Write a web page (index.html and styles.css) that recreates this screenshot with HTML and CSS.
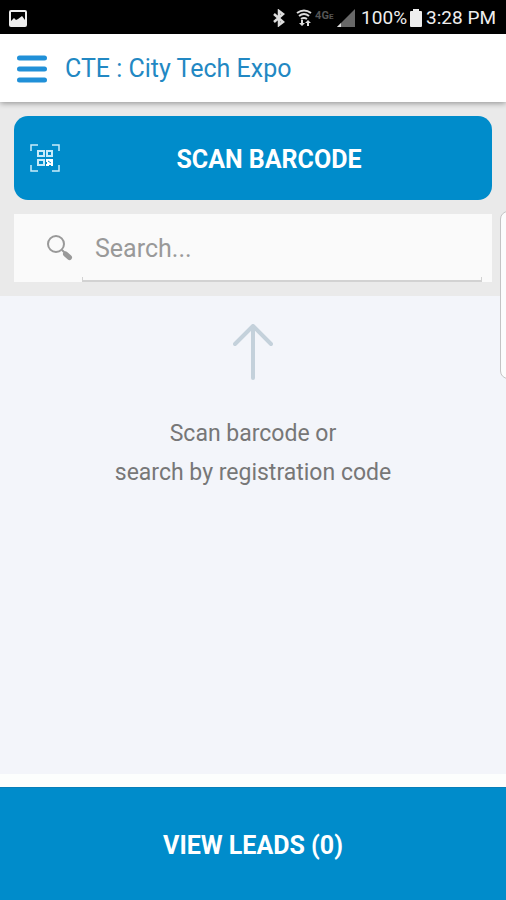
FILE: index.html
```html
<!DOCTYPE html>
<html lang="en">
<head>
<meta charset="utf-8">
<meta name="viewport" content="width=device-width, initial-scale=1">
<title>CTE : City Tech Expo</title>
<link rel="stylesheet" href="styles.css">
</head>
<body>
<div class="app">
  <div class="status">
    <svg class="status-photo" width="18" height="17" viewBox="0 0 18 17" aria-hidden="true">
      <path fill="#eee" fill-rule="evenodd" d="M2 0h14q2 0 2 2v13q0 2-2 2H2q-2 0-2-2V2q0-2 2-2zM2 2v9l3-3 2 2 2-1 4-3 3 4V2z"/>
    </svg>
    <svg width="12" height="18" viewBox="0 0 12 18" fill="none" stroke="#ddd" stroke-width="2.500" aria-hidden="true">
      <path d="M1 5l9 8-4 3V2l4 3-9 8"/>
    </svg>
    <svg class="status-wifi" width="16" height="18" viewBox="0 0 16 18" fill="none" stroke="#ddd" stroke-width="2" aria-hidden="true">
      <path d="M1 4q7-5 14 0M3 7q5-4 10 0M5 10q3-2 6 0"/>
      <path fill="#ddd" stroke="none" d="M3 14h2v-3h2v3h2l-3 3zM9 14l3-3 3 3h-2v3h-2v-3z"/>
    </svg>
    <span class="status-network">4G<small>E</small></span>
    <svg class="status-signal" width="18" height="18" viewBox="0 0 18 18" aria-hidden="true">
      <path fill="#686868" d="M18 0v18H0z"/><path fill="#ddd" d="M4 14v4H0z"/>
    </svg>
    <span class="status-text">100%</span>
    <svg class="status-battery" width="12" height="18" viewBox="0 0 12 18" aria-hidden="true">
      <path fill="#eee" d="M3 0h6v2h2q1 0 1 1v14q0 1-1 1H1q-1 0-1-1V3q0-1 1-1h2z"/>
    </svg>
    <span class="status-text">3:28 PM</span>
  </div>

  <header class="header">
    <button class="menu" type="button" aria-label="Menu">
      <svg width="30" height="28" viewBox="0 0 30 28" fill="none" stroke="#2090d8" stroke-width="5" stroke-linecap="round" aria-hidden="true">
        <path d="M2.500 3h25M2.500 14h25M2.500 25h25"/>
      </svg>
    </button>
    <h1 class="title">CTE : City Tech Expo</h1>
  </header>

  <section class="tools">
    <button class="scan" type="button">
      <svg width="30" height="28" viewBox="0 0 30 28" fill="none" stroke="#c8ebfa" aria-hidden="true">
        <path stroke-width="1.500" d="M1 7V1h7M22 1h7v6M29 21v6h-7M8 27H1v-6"/>
        <path stroke-width="2" d="M8 7h6v5H8zM17 7h5v5h-5zM8 16h6v5H8z"/>
        <path fill="#fff" stroke="none" d="M16 15h7v7h-2v-1h-2v1h-3v-2h1v-2h-1z"/>
        <path stroke="#008ccb" d="M18 17l3 2"/>
      </svg>
      <span class="scan-label">SCAN BARCODE</span>
    </button>
    <div class="search">
      <svg width="28" height="28" viewBox="0 0 28 28" fill="none" stroke="#999" aria-hidden="true">
        <circle cx="10" cy="10" r="8" stroke-width="2"/>
        <path stroke-width="2" d="M16 16l3 3"/>
        <path stroke-width="5" stroke-linecap="round" d="M19.500 20l4 3.500"/>
      </svg>
      <input class="search-input" type="text" placeholder="Search..." aria-label="Search">
    </div>
  </section>

  <main class="empty">
    <svg width="40" height="56" viewBox="0 0 40 56" fill="none" stroke="#c4d1db" stroke-width="4" stroke-linecap="round" stroke-linejoin="round" aria-hidden="true">
      <path d="M20 54V2M2 20L20 2l18 18"/>
    </svg>
    <p class="hint">Scan barcode or<br>search by registration code</p>
  </main>

  <button class="leads" type="button">VIEW LEADS (0)</button>
  <div class="edge-handle"></div>
</div>
</body>
</html>
```

FILE: styles.css
```css
* {
  box-sizing: border-box;
}

body {
  margin: 0;
  font-family: Roboto, "Liberation Sans", sans-serif;
}

button {
  border: 0;
  font-family: inherit;
  cursor: pointer;
}

svg {
  display: block;
  flex: none;
}

.app {
  position: relative;
  display: flex;
  flex-direction: column;
  min-height: 100vh;
  overflow: hidden;
  background: #fcfefd;
}

.status {
  display: flex;
  align-items: center;
  height: 34px;
  padding: 2px 10px 0 9px;
  background: #000;
  color: #eee;
}

.status-photo {
  margin-right: auto;
}

.status-wifi {
  margin-left: 11px;
}

.status-network {
  width: 20px;
  margin: 0 2px 4px 3px;
  font-size: 11px;
  font-weight: 700;
  line-height: 12px;
  color: #555;
}

.status-network small {
  font-size: 8px;
}

.status-signal {
  margin-right: 6px;
}

.status-text {
  font-size: 19px;
  line-height: 24px;
  white-space: nowrap;
}

.status-battery {
  margin: 0 4px 0 3px;
}

.header {
  position: relative;
  display: flex;
  align-items: center;
  gap: 18px;
  height: 68px;
  padding: 2px 17px 0;
  background: #fff;
  box-shadow: 0 1px 6px rgba(0, 0, 0, 0.4);
}

.menu {
  padding: 0;
  background: none;
}

.title {
  margin: 0;
  font-size: 25px;
  font-weight: 400;
  line-height: 32px;
  color: #2288c3;
}

.tools {
  display: flex;
  flex-direction: column;
  gap: 14px;
  padding: 14px;
  background: #eaeaea;
}

.scan {
  display: flex;
  align-items: center;
  height: 84px;
  padding: 0 16px;
  border-radius: 14px;
  background: #008ccb;
  color: #fff;
}

.scan-label {
  flex: 1;
  padding: 4px 0 0 2px;
  font-size: 25px;
  font-weight: 700;
  line-height: 32px;
  text-align: center;
}

.search {
  display: flex;
  align-items: center;
  height: 68px;
  padding: 0 10px 0 32px;
  background: #fafafa;
}

.search-input {
  flex: 1;
  align-self: stretch;
  min-width: 0;
  margin-left: 8px;
  padding: 2px 13px 0;
  border: 0;
  outline: 0;
  background:
    linear-gradient(#d2d2d2, #d2d2d2) left bottom / 1px 5px no-repeat,
    linear-gradient(#d2d2d2, #d2d2d2) right bottom / 1px 5px no-repeat,
    linear-gradient(#d2d2d2, #d2d2d2) left bottom / 100% 2px no-repeat;
  font: 25px/32px Roboto, "Liberation Sans", sans-serif;
  color: #555;
}

.search-input::placeholder {
  color: #999;
  opacity: 1;
}

.empty {
  display: flex;
  flex: 1;
  flex-direction: column;
  align-items: center;
  gap: 34px;
  padding: 28px 16px;
  background: #f3f5fa;
}

.hint {
  margin: 0;
  font-size: 23px;
  line-height: 39px;
  text-align: center;
  color: #777;
}

.leads {
  height: 113px;
  margin-top: 13px;
  padding-top: 4px;
  border-top: 1px solid #077fb9;
  background: #008ccb;
  font-size: 25px;
  font-weight: 700;
  line-height: 32px;
  color: #fff;
}

.edge-handle {
  position: absolute;
  top: 211px;
  right: -10px;
  width: 16px;
  height: 168px;
  border: 1px solid #c4c4c4;
  border-radius: 8px;
  background: #fcfcfc;
}
```
